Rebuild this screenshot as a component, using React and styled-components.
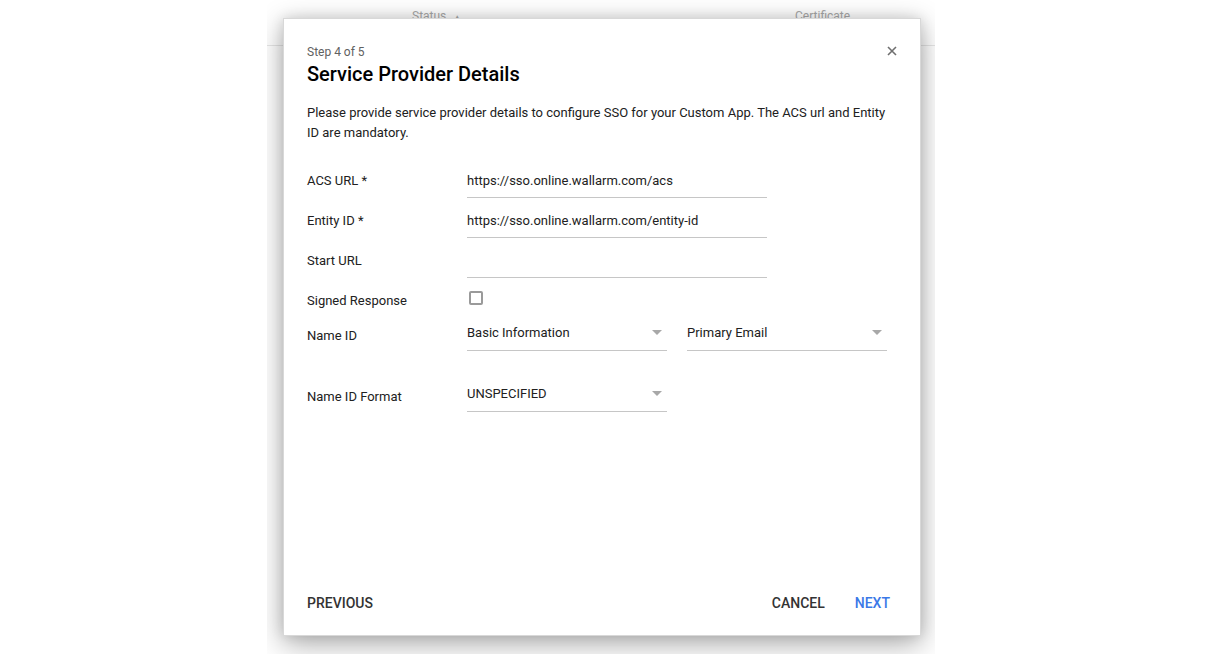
import styled, { createGlobalStyle } from "styled-components";

const GlobalStyle = createGlobalStyle`
  body {
    margin: 0;
    background: #ffffff;
    font-family: Roboto, "Liberation Sans", sans-serif;
    color: #212121;
  }
`;

function Field({ value }) {
  return <TextField>{value}</TextField>;
}

function Dropdown({ value }) {
  return (
    <SelectBox>
      <span>{value}</span>
      <Caret />
    </SelectBox>
  );
}

export default function App() {
  return (
    <>
      <GlobalStyle />
      <Page>
        <Backdrop>
          <TableHead>
            <HeadCell $left={145}>Status <small>▲</small></HeadCell>
            <HeadCell $left={528}>Certificate</HeadCell>
          </TableHead>

          <Modal>
            <Header>
              <div>
                <Step>Step 4 of 5</Step>
                <Title>Service Provider Details</Title>
              </div>
              <Close aria-label="close">
                <svg width="10" height="10" viewBox="0 0 10 10">
                  <path d="M1 1 L9 9 M9 1 L1 9" stroke="#6f6f6f" strokeWidth="1.6" />
                </svg>
              </Close>
            </Header>

            <Description>
              Please provide service provider details to configure SSO for your Custom App. The ACS url and Entity ID are mandatory.
            </Description>

            <Form>
              <InputRow>
                <Label>ACS URL *</Label>
                <Field value="https://sso.online.wallarm.com/acs" />
              </InputRow>
              <InputRow>
                <Label>Entity ID *</Label>
                <Field value="https://sso.online.wallarm.com/entity-id" />
              </InputRow>
              <InputRow>
                <Label>Start URL</Label>
                <Field value="" />
              </InputRow>
              <CheckRow>
                <Label>Signed Response</Label>
                <CheckBox />
              </CheckRow>
              <SelectRow>
                <Label>Name ID</Label>
                <Selects>
                  <Dropdown value="Basic Information" />
                  <Dropdown value="Primary Email" />
                </Selects>
              </SelectRow>
              <SelectRow $spaced>
                <Label>Name ID Format</Label>
                <Selects>
                  <Dropdown value="UNSPECIFIED" />
                </Selects>
              </SelectRow>
            </Form>

            <Footer>
              <TextButton>PREVIOUS</TextButton>
              <Actions>
                <TextButton>CANCEL</TextButton>
                <TextButton $primary>NEXT</TextButton>
              </Actions>
            </Footer>
          </Modal>
        </Backdrop>
      </Page>
    </>
  );
}

const Page = styled.div`
  width: 1206px;
  height: 654px;
  display: flex;
  justify-content: center;
  overflow: hidden;
`

const Backdrop = styled.div`
  position: relative;
  width: 668px;
  height: 700px;
  margin-left: -4px;
  background: #ffffff;
  overflow: hidden;
`

const TableHead = styled.div`
  position: relative;
  height: 45px;
  border-bottom: 1px solid #e6e6e6;
`

const HeadCell = styled.div`
  position: absolute;
  top: 9px;
  left: ${p => p.$left}px;
  font-size: 12px;
  color: #a8a8a8;

  small{
    font-size: 8px;
    margin-left: 4px;
  }
`

const Modal = styled.div`
  position: absolute;
  top: 18px;
  left: 16px;
  width: 638px;
  height: 618px;
  box-sizing: border-box;
  background: #ffffff;
  border: 1px solid #d8d8d8;
  box-shadow: 0 8px 28px rgba(0, 0, 0, 0.33), 0 0 12px rgba(0, 0, 0, 0.12);
  display: flex;
  flex-direction: column;
  padding: 24px 23px 14px 23px;
`

const Header = styled.div`
  display: flex;
  justify-content: space-between;
  align-items: flex-start;
`

const Step = styled.div`
  font-size: 12px;
  line-height: 18px;
  color: #616161;
`

const Title = styled.div`
  margin-top: -1px;
  font-size: 20px;
  line-height: 28px;
  font-weight: 500;
  color: #000000;
`

const Close = styled.div`
  width: 10px;
  height: 10px;
  margin-top: 3px;
  cursor: pointer;

  svg{
    display: block;
  }
`

const Description = styled.p`
  margin: 15px 0 0 0;
  font-size: 13px;
  line-height: 20px;
  color: #212121;
`

const Form = styled.div`
  margin-top: 17px;
  display: flex;
  flex-direction: column;
`

const Label = styled.div`
  width: 160px;
  flex-shrink: 0;
  font-size: 13px;
  color: #212121;
`

const InputRow = styled.div`
  height: 40px;
  display: flex;
  align-items: center;
`

const TextField = styled.div`
  width: 300px;
  height: 38px;
  box-sizing: border-box;
  padding-top: 4px;
  margin-bottom: 2px;
  display: flex;
  align-items: center;
  font-size: 13px;
  color: #212121;
  border-bottom: 1px solid #c6c6c6;
`

const CheckRow = styled.div`
  height: 40px;
  display: flex;
  align-items: center;
`

const CheckBox = styled.div`
  width: 14px;
  height: 14px;
  box-sizing: border-box;
  margin-left: 2px;
  margin-top: -5px;
  border: 2px solid #9a9a9a;
  border-radius: 2px;
`

const SelectRow = styled.div`
  height: 31px;
  margin-top: ${p => (p.$spaced ? "30px" : "0")};
  display: flex;
  align-items: center;
`

const Selects = styled.div`
  display: flex;
  gap: 20px;
`

const SelectBox = styled.div`
  position: relative;
  width: 200px;
  height: 31px;
  box-sizing: border-box;
  padding-bottom: 6px;
  display: flex;
  align-items: center;
  font-size: 13px;
  color: #212121;
  border-bottom: 1px solid #c6c6c6;
`

const Caret = styled.span`
  position: absolute;
  right: 5px;
  top: 10px;
  width: 0;
  height: 0;
  border-left: 5px solid transparent;
  border-right: 5px solid transparent;
  border-top: 5px solid #a8a8a8;
`

const Footer = styled.div`
  margin-top: auto;
  height: 36px;
  display: flex;
  align-items: center;
  justify-content: space-between;
  padding-right: 7px;
`

const Actions = styled.div`
  display: flex;
  gap: 30px;
`

const TextButton = styled.div`
  font-size: 14px;
  font-weight: 500;
  color: ${p => (p.$primary ? "#3b78e7" : "#333333")};
  cursor: pointer;
`
